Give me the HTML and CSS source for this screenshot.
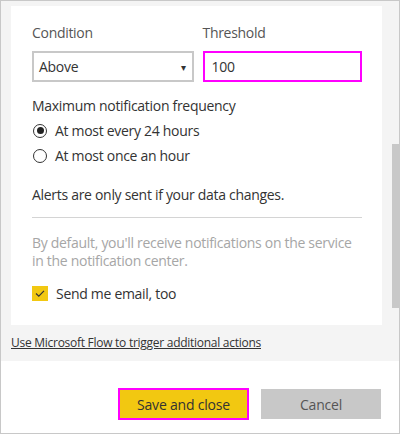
FILE: index.html
```html
<!DOCTYPE html>
<html>
<head>
<meta charset="utf-8">
<link rel="stylesheet" href="styles.css">
</head>
<body>
<div class="frame">
  <div class="top">
    <div class="main">
      <div class="card">
        <div class="row">
          <div class="field">
            <div class="label">Condition</div>
            <div class="select"><span>Above</span><span class="arrow">&#9662;</span></div>
          </div>
          <div class="field field-right">
            <div class="label">Threshold</div>
            <div class="input">100</div>
          </div>
        </div>
        <div class="freq-label">Maximum notification frequency</div>
        <div class="radio radio-first"><span class="circle checked"></span><span>At most every 24 hours</span></div>
        <div class="radio"><span class="circle"></span><span>At most once an hour</span></div>
        <div class="note">Alerts are only sent if your data changes.</div>
        <div class="divider"></div>
        <div class="muted">By default, you'll receive notifications on the service in the notification center.</div>
        <div class="check">
          <span class="box"><svg width="16" height="15" viewBox="0 0 16 15"><path d="M4 7.5 L6.8 10.2 L12 4.8" fill="none" stroke="#333" stroke-width="1.2"/></svg></span>
          <span>Send me email, too</span>
        </div>
      </div>
      <a class="link">Use Microsoft Flow to trigger additional actions</a>
    </div>
    <div class="track"><div class="thumb"></div></div>
  </div>
  <div class="bottom">
    <button class="btn save">Save and close</button>
    <button class="btn cancel">Cancel</button>
  </div>
</div>
</body>
</html>
```
FILE: styles.css
```css
html, body { margin: 0; padding: 0; }
body { font-family: "Open Sans", "Noto Sans", sans-serif; color: #333; }
.frame {
  width: 400px; height: 434px; box-sizing: border-box;
  border: 1px solid #c8c8c8; display: flex; flex-direction: column;
  background: #fff;
}
.top {
  height: 360px; background: #f4f4f4; display: flex;
  padding: 5px 0 0 10px; box-sizing: border-box;
}
.main { width: 371px; }
.card {
  background: #fff; height: 319px; box-sizing: border-box;
  padding: 18px 20px 0 21px; font-size: 14px; letter-spacing: -0.3px;
}
.row { display: flex; gap: 9px; }
.field { width: 162px; }
.field-right { width: 160px; }
.label { color: #555; line-height: 18px; height: 18px; margin-bottom: 9px; }
.select, .input {
  height: 31px; box-sizing: border-box; display: flex; align-items: center;
}
.select {
  border: 2px solid #c8c8c8; padding: 0 6px 0 5px; justify-content: space-between;
}
.arrow { font-size: 10px; color: #333; }
.input { border: 2px solid #ff00ff; padding-left: 7px; }
.freq-label { margin-top: 15px; line-height: 18px; }
.radio { display: flex; align-items: center; gap: 8px; height: 25px; }
.radio-first { margin-top: 3px; }
.circle {
  width: 14px; height: 14px; border: 1px solid #333; border-radius: 50%;
  box-sizing: border-box; position: relative; margin-left: 1px; flex: none;
}
.circle.checked::after {
  content: ""; position: absolute; left: 2.5px; top: 2.5px; width: 7px; height: 7px;
  border-radius: 50%; background: #222;
}
.note { margin-top: 18px; line-height: 18px; }
.divider { height: 1px; background: #d4d4d4; margin-top: 13px; }
.muted { color: #a6a6a6; margin-top: 16px; line-height: 18px; }
.check { display: flex; align-items: center; gap: 8px; margin-top: 14px; }
.box { width: 16px; height: 15px; background: #f2c811; display: block; flex: none; }
.box svg { display: block; }
.link {
  display: block; margin-top: 10px; font-size: 12px; color: #333;
  text-decoration: underline; letter-spacing: -0.27px; line-height: 16px;
}
.track { width: 7px; margin-left: 10px; }
.thumb { width: 7px; height: 164px; margin-top: 138px; background: #c8c8c8; }
.bottom {
  flex: 1; display: flex; justify-content: flex-end; align-items: flex-start;
  padding: 27px 18px 0 0; gap: 12px;
}
.btn {
  font-family: "Open Sans", "Noto Sans", sans-serif; font-size: 14px; color: #333;
  height: 31px; box-sizing: border-box; margin: 0; letter-spacing: -0.2px;
}
.save { width: 131px; background: #f2c811; border: 2px solid #ff00ff; height: 32px; }
.cancel { width: 120px; background: #c8c8c8; border: none; margin-top: 1px; height: 30px; color: #555; }
```
